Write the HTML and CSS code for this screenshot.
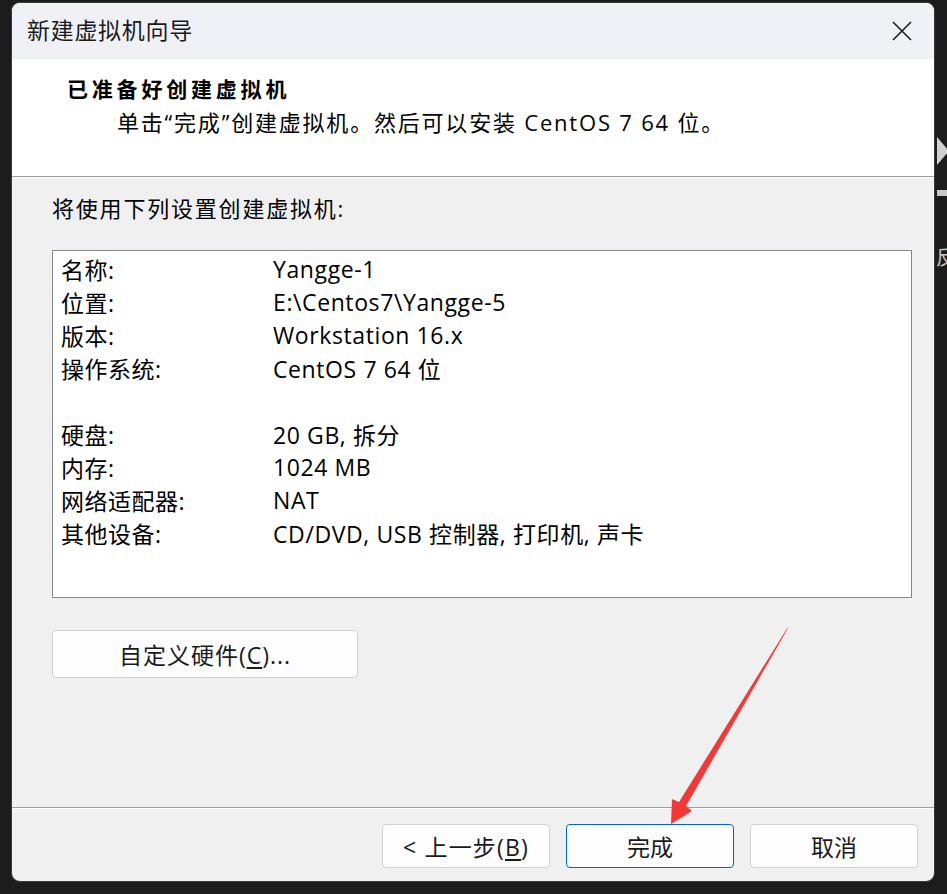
FILE: index.html
```html
<!DOCTYPE html>
<html lang="zh-CN">
<head>
    <meta charset="UTF-8">
    <title>新建虚拟机向导</title>
    <link rel="stylesheet" href="styles.css">
</head>
<body>
    <div class="window">
        <div class="titlebar">
            <span class="title">新建虚拟机向导</span>
            <svg class="close" width="20" height="20" viewBox="0 0 20 20">
                <path d="M1 1 L19 19 M19 1 L1 19" stroke="#1a1a1a" stroke-width="1.6" fill="none"/>
            </svg>
        </div>

        <div class="header">
            <div class="header-title">已准备好创建虚拟机</div>
            <div class="header-sub">单击“完成”创建虚拟机。然后可以安装 CentOS 7 64 位。</div>
        </div>

        <div class="content">
            <p class="intro">将使用下列设置创建虚拟机:</p>

            <div class="listbox">
                <div class="row"><span class="label">名称:</span><span>Yangge-1</span></div>
                <div class="row"><span class="label">位置:</span><span>E:\Centos7\Yangge-5</span></div>
                <div class="row"><span class="label">版本:</span><span>Workstation 16.x</span></div>
                <div class="row"><span class="label">操作系统:</span><span>CentOS 7 64 位</span></div>
                <div class="row"></div>
                <div class="row"><span class="label">硬盘:</span><span>20 GB, 拆分</span></div>
                <div class="row"><span class="label">内存:</span><span>1024 MB</span></div>
                <div class="row"><span class="label">网络适配器:</span><span>NAT</span></div>
                <div class="row"><span class="label">其他设备:</span><span>CD/DVD, USB 控制器, 打印机, 声卡</span></div>
            </div>

            <button class="btn btn-custom">自定义硬件(<u>C</u>)...</button>
        </div>

        <div class="footer">
            <button class="btn btn-back">&lt; 上一步(<u>B</u>)</button>
            <button class="btn btn-default">完成</button>
            <button class="btn">取消</button>
        </div>
    </div>

    <!-- bits of the window behind -->
    <div class="bg-chevron"></div>
    <div class="bg-bar"></div>
    <div class="bg-char">反</div>

    <svg class="arrow" width="947" height="894" viewBox="0 0 947 894">
        <polygon points="788,627 787,630 686,806 692,811 671,824 672,799 679,802" fill="#f43838"/>
    </svg>
</body>
</html>
```

FILE: styles.css
```css
body {
    margin: 0;
    width: 947px;
    height: 894px;
    background-color: #1c1c1c;
    font-family: "Open Sans", "Noto Sans CJK SC", sans-serif;
    color: #000;
    overflow: hidden;
    position: relative;
}
.window {
    margin: 2px 0 0 11px;
    width: 922px;
    height: 878px;
    background-color: #f0f0f0;
    border: 1px solid #3a3a3a;
    border-radius: 9px;
    overflow: hidden;
    display: flex;
    flex-direction: column;
}
.titlebar {
    height: 56px;
    background-color: #eff1f6;
    display: flex;
    align-items: center;
    justify-content: space-between;
    padding: 0 22px 4px 15px;
    box-sizing: border-box;
    flex-shrink: 0;
}
.title {
    font-family: "Noto Sans CJK SC", sans-serif;
    font-size: 23px;
    letter-spacing: 0.7px;
    color: #1a1a1a;
}
.close {
    margin-top: 4px;
}
.header {
    height: 118px;
    background-color: #fff;
    border-bottom: 1px solid #a0a0a0;
    box-shadow: 0 1px 0 #fff;
    padding: 0 0 0 55px;
    flex-shrink: 0;
    box-sizing: border-box;
}
.header-title {
    font-family: "Noto Sans CJK SC", sans-serif;
    font-size: 21px;
    font-weight: bold;
    letter-spacing: 3.8px;
    margin-top: 14px;
    line-height: 30px;
}
.header-sub {
    font-size: 22px;
    letter-spacing: 1.8px;
    line-height: 32px;
    margin: 3px 0 0 50px;
}
.content {
    flex: 1;
    padding: 0 22px 0 40px;
    border-bottom: 1px solid #a0a0a0;
    box-shadow: 0 1px 0 #fff;
}
.intro {
    margin: 16px 0 0 0;
    font-size: 22px;
    line-height: 30px;
    letter-spacing: 1.8px;
}
.listbox {
    margin-top: 27px;
    height: 348px;
    background-color: #fff;
    border: 1px solid #828790;
    padding: 1px 0 0 8px;
    box-sizing: border-box;
}
.row {
    display: flex;
    height: 33px;
    align-items: center;
    font-size: 23px;
    letter-spacing: 0.6px;
}
.label {
    width: 212px;
    letter-spacing: 0.5px;
}
.btn {
    font-family: "Open Sans", "Noto Sans CJK SC", sans-serif;
    font-size: 23px;
    background-color: #fdfdfd;
    border: 1px solid #d0d0d0;
    border-radius: 4px;
    width: 168px;
    height: 44px;
    color: #1a1a1a;
    padding: 0;
}
.btn u {
    text-underline-offset: 3px;
}
.btn-custom {
    margin-top: 32px;
    width: 306px;
    height: 48px;
    letter-spacing: 1px;
}
.btn-back {
    letter-spacing: 1.2px;
}
.btn-default {
    border-color: #0067c0;
}
.footer {
    height: 73px;
    display: flex;
    justify-content: flex-end;
    gap: 16px;
    padding: 16px 16px 0 0;
    box-sizing: border-box;
    flex-shrink: 0;
}
.bg-chevron {
    position: absolute;
    left: 937px;
    top: 137px;
    width: 0;
    height: 0;
    border-top: 14px solid transparent;
    border-bottom: 14px solid transparent;
    border-left: 12px solid #d0d0d0;
}
.bg-bar {
    position: absolute;
    left: 937px;
    top: 190px;
    width: 10px;
    height: 6px;
    background-color: #c8c8c8;
}
.bg-char {
    position: absolute;
    left: 936px;
    top: 244px;
    font-family: "Noto Sans CJK SC", sans-serif;
    font-size: 20px;
    color: #c8c8c8;
    line-height: 26px;
}
.arrow {
    position: absolute;
    left: 0;
    top: 0;
    pointer-events: none;
}
```
